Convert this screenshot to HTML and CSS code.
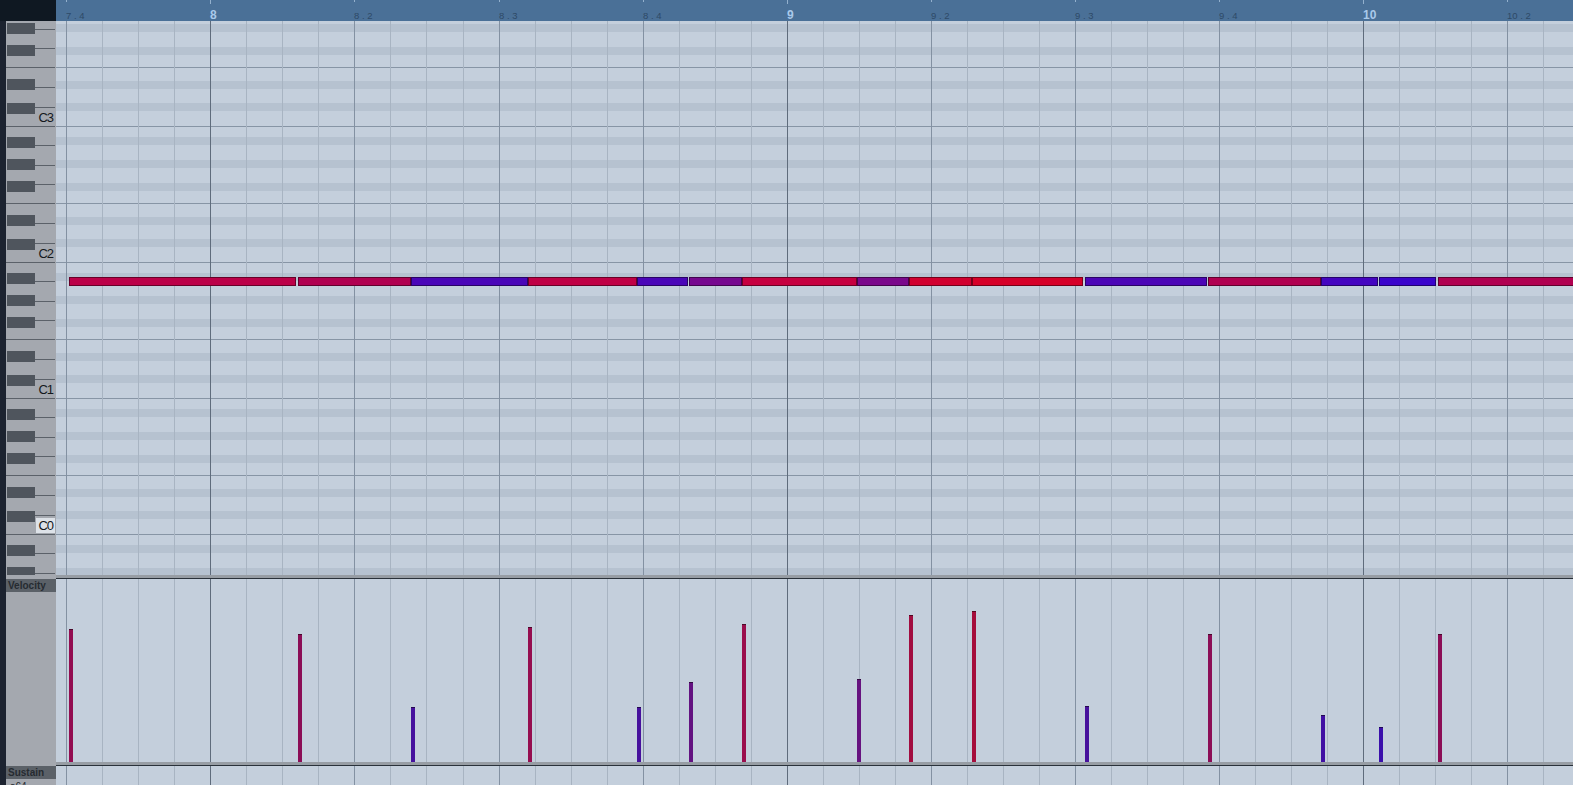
FILE: index.html
```html
<!DOCTYPE html>
<html lang="en">
<head>
<meta charset="utf-8">
<title>Key Editor</title>
<link rel="stylesheet" href="styles.css">
</head>
<body>
<div class="editor">
  <div class="corner"></div>
  <div class="ruler" id="ruler"></div>
  <div class="strip"></div>

  <div class="keys" id="keys"></div>
  <div class="roll" id="roll"></div>

  <div class="keygap"></div>
  <div class="sep"></div>

  <div class="lane-head">
    <div class="lane-title">Velocity</div>
  </div>
  <div class="lane" id="velocity"></div>

  <div class="keygap"></div>
  <div class="sep"></div>

  <div class="lane-head">
    <div class="lane-title">Sustain</div>
    <div class="lane-value">a64</div>
  </div>
  <div class="lane" id="sustain"></div>
</div>
<script src="script.js"></script>
</body>
</html>
```

FILE: styles.css
```css
* { box-sizing: border-box; }

html, body {
  margin: 0;
  padding: 0;
  background: #1c2330;
}

body {
  font-family: "Liberation Sans", Arial, sans-serif;
}

.editor {
  width: 1573px;
  height: 785px;
  overflow: hidden;
  display: grid;
  grid-template-columns: 6px 50px 1517px;
  grid-template-rows: 21px 554px 4px 183px 4px 19px;
}

.corner {
  grid-column: 1 / 3;
  grid-row: 1;
  background: #0f1822;
}

.strip {
  grid-column: 1;
  grid-row: 2 / -1;
  background: #1c2330;
}

/* time ruler */
.ruler {
  grid-column: 3;
  grid-row: 1;
  background: #4a7097;
  position: relative;
  overflow: hidden;
}

.ruler svg { position: absolute; left: 0; top: 0; }

.bar-num,
.beat-num {
  position: absolute;
  white-space: pre;
}

.bar-num {
  top: 8px;
  font: bold 12px/14px "Liberation Sans", Arial, sans-serif;
  color: #a9c9ea;
}

.beat-num {
  top: 10px;
  font: 9.5px/11px "Liberation Sans", Arial, sans-serif;
  color: #2e4a67;
}

/* piano keyboard */
.keys {
  grid-column: 2;
  grid-row: 2;
  background: #a4a8af;
  position: relative;
  overflow: hidden;
}

.oct-label {
  position: absolute;
  right: 1px;
  width: 19px;
  height: 15px;
  padding-right: 2px;
  text-align: right;
  font: 13px/15px "Liberation Sans", Arial, sans-serif;
  letter-spacing: -1px;
  color: #14181d;
}

.oct-label.current { background: #dde2e8; }

/* note grid */
.roll {
  grid-column: 3;
  grid-row: 2;
  background: #c4cfdc;
  overflow: hidden;
}

.keygap {
  grid-column: 2;
  background: #a4a8af;
}

.sep {
  grid-column: 3;
  background: #979da4;
  border-bottom: 1px solid #29313a;
}

/* controller lanes */
.lane-head {
  grid-column: 2;
  background: #a4a8af;
  overflow: hidden;
  display: flex;
  flex-direction: column;
}

.lane-title {
  height: 13px;
  flex: none;
  padding-left: 2px;
  background: #5b6168;
  color: #262b31;
  font: bold 10px/13px "Liberation Sans", Arial, sans-serif;
}

.lane-value {
  padding: 2px 0 0 4px;
  color: #262b31;
  font: 10px/12px "Liberation Sans", Arial, sans-serif;
}

.lane {
  grid-column: 3;
  background: #c4cfdc;
  overflow: hidden;
}

svg { display: block; shape-rendering: crispEdges; }

.stripe { fill: #b6c2d0; }
.hl { stroke: #8795a5; stroke-width: 1; }
.v { stroke-width: 1; }
.v.six { stroke: #a8b4c2; }
.v.beat { stroke: #8391a2; }
.v.bar { stroke: #5f6c7c; }

.bk { fill: #4f555d; }
.kl { stroke: #5b6169; stroke-width: 1; }

.tick { stroke: #93b0cd; stroke-width: 1; }
```

FILE: script.js
```js
// Piano-roll drawing: grid, keyboard, notes, velocity lane and ruler.
const X0 = 210.3;      // page x of bar 8
const SIX = 36.03;     // width of one sixteenth
const LEFT = 56;       // page x where the grid starts
const TOP = 21;        // page y where the grid starts
const W = 1517;        // grid width
const ROLL_H = 554;
const VEL_H = 183;
const C_LINES = [-10, 126, 262, 398, 534, 670]; // page y under each C key
const SEMI = 136 / 12;

const px = (v) => Math.round(v) + 0.5;
const svg = (w, h, body) =>
  `<svg width="${w}" height="${h}" viewBox="0 0 ${w} ${h}" xmlns="http://www.w3.org/2000/svg">${body}</svg>`;

function gridLines(h) {
  let s = '';
  for (let k = -4; k <= 37; k++) {
    const x = px(X0 + k * SIX - LEFT);
    const kind = k % 16 === 0 ? 'bar' : (k % 4 === 0 ? 'beat' : 'six');
    s += `<line class="v ${kind}" x1="${x}" x2="${x}" y1="0" y2="${h}"/>`;
  }
  return s;
}

// velocity (bar height in px) -> colour
const STOPS = [
  [35, [58, 4, 204]],
  [55, [74, 6, 184]],
  [80, [118, 8, 143]],
  [128, [176, 0, 80]],
  [138, [198, 0, 64]],
  [151, [214, 0, 40]]
];

function velColor(h) {
  if (h <= STOPS[0][0]) return STOPS[0][1];
  for (let i = 1; i < STOPS.length; i++) {
    if (h <= STOPS[i][0]) {
      const [h0, c0] = STOPS[i - 1];
      const [h1, c1] = STOPS[i];
      const t = (h - h0) / (h1 - h0);
      return c0.map((v, j) => Math.round(v + (c1[j] - v) * t));
    }
  }
  return STOPS[STOPS.length - 1][1];
}

const rgb = (c) => `rgb(${c[0]},${c[1]},${c[2]})`;
const shade = (c, f) => c.map((v) => Math.round(v * f));
const mix = (c, m, t) => c.map((v, i) => Math.round(v * (1 - t) + m[i] * t));

// [start x, end x, velocity bar top y] in page coordinates
const NOTES = [
  [69, 296, 629],
  [298, 411, 634],
  [411, 528, 707],
  [528, 637, 627],
  [637, 688, 707],
  [689, 742, 682],
  [742, 857, 624],
  [857, 909, 679],
  [909, 972, 615],
  [972, 1083, 611],
  [1085, 1207, 706],
  [1208, 1321, 634],
  [1321, 1378, 715],
  [1379, 1436, 727],
  [1438, 1575, 634]
];

const NOTE_Y = 277;
const VEL_TOP = 579;
const VEL_BOTTOM = 762;

/* ---- note grid ---- */
let roll = '';
for (const L of C_LINES) {
  for (const s of [1, 3, 6, 8, 10]) {
    const top = Math.round(L - SEMI * (s + 1)) - TOP;
    roll += `<rect class="stripe" x="0" y="${top}" width="${W}" height="8"/>`;
  }
}
for (const L of C_LINES) {
  for (const off of [0, 59]) {
    const y = L - off - TOP + 0.5;
    roll += `<line class="hl" x1="0" x2="${W}" y1="${y}" y2="${y}"/>`;
  }
}
roll += gridLines(ROLL_H);
for (const [a, b, top] of NOTES) {
  const c = velColor(VEL_BOTTOM - top);
  roll += `<rect x="${a - LEFT + 0.5}" y="${NOTE_Y - TOP + 0.5}" width="${b - a - 1}" height="8" fill="${rgb(c)}" stroke="${rgb(shade(c, 0.55))}"/>`;
}
document.getElementById('roll').innerHTML = svg(W, ROLL_H, roll);

/* ---- keyboard ---- */
let keys = '';
for (const L of C_LINES) {
  const y = L - TOP;
  for (const off of [19, 39, 78, 97, 117]) {
    keys += `<line class="kl" x1="29" x2="49" y1="${y - off + 0.5}" y2="${y - off + 0.5}"/>`;
  }
  for (const off of [0, 59]) {
    keys += `<line class="kl" x1="0" x2="49" y1="${y - off + 0.5}" y2="${y - off + 0.5}"/>`;
  }
  for (const off of [23, 47, 81, 103, 125]) {
    keys += `<rect class="bk" x="1" y="${y - off}" width="28" height="11"/>`;
  }
}
let labels = '';
[[126, 'C3'], [262, 'C2'], [398, 'C1'], [534, 'C0']].forEach(([L, name]) => {
  const cls = name === 'C0' ? 'oct-label current' : 'oct-label';
  labels += `<span class="${cls}" style="top:${L - TOP - 16}px">${name}</span>`;
});
document.getElementById('keys').innerHTML = svg(50, ROLL_H, keys) + labels;

/* ---- velocity lane ---- */
let vel = gridLines(VEL_H);
for (const [a, , top] of NOTES) {
  const c = mix(velColor(VEL_BOTTOM - top), [60, 40, 100], 0.32);
  const y = top - VEL_TOP;
  vel += `<rect x="${a - LEFT}" y="${y}" width="4" height="${VEL_H - y}" fill="${rgb(c)}"/>`;
  vel += `<rect x="${a - LEFT}" y="${y}" width="4" height="1" fill="${rgb(shade(c, 0.5))}"/>`;
}
document.getElementById('velocity').innerHTML = svg(W, VEL_H, vel);

/* ---- sustain lane ---- */
document.getElementById('sustain').innerHTML = svg(W, 19, gridLines(19));

/* ---- ruler ---- */
let ticks = '';
let rulerText = '';
for (let k = -4; k <= 37; k += 4) {
  const x = X0 + k * SIX - LEFT;
  const isBar = k % 16 === 0;
  ticks += `<line class="tick" x1="${px(x)}" x2="${px(x)}" y1="0" y2="${isBar ? 4 : 2}"/>`;
  const bar = 8 + Math.floor(k / 16);
  const beat = (((k % 16) + 16) % 16) / 4 + 1;
  const left = Math.round(x);
  if (isBar) {
    rulerText += `<span class="bar-num" style="left:${left}px">${bar}</span>`;
  } else {
    rulerText += `<span class="beat-num" style="left:${left}px">${bar} . ${beat}</span>`;
  }
}
document.getElementById('ruler').innerHTML = svg(W, 21, ticks) + rulerText;
```
